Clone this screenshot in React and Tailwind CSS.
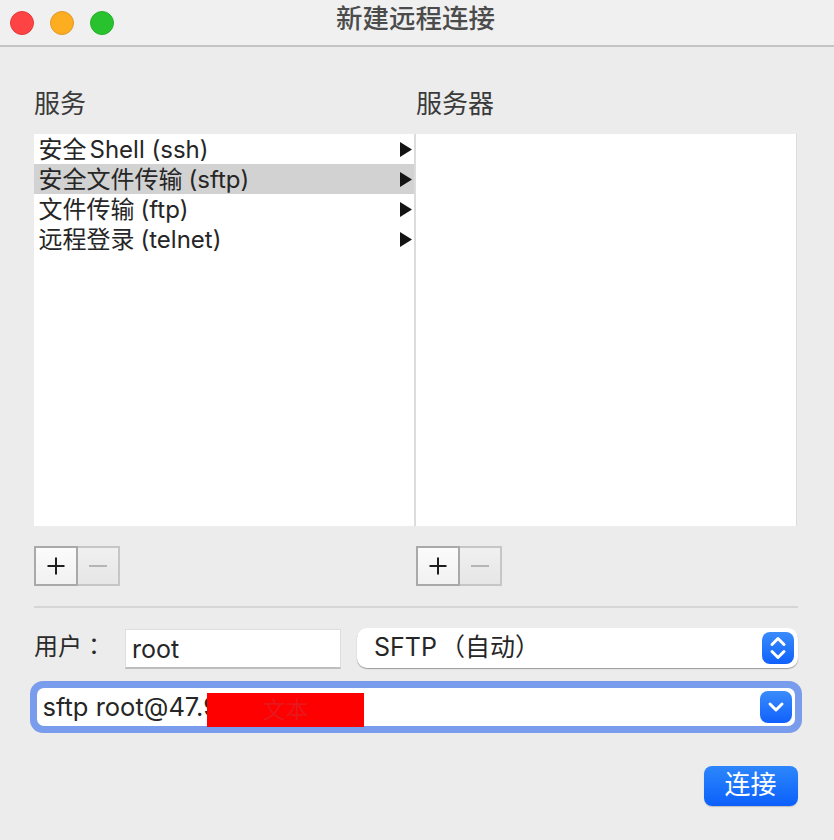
import React from 'react';

const font = "font-['Inter','Noto_Sans_CJK_SC',sans-serif]";

const services = [
  ['安全', 'Shell (ssh)'],
  ['安全文件传输', '(sftp)'],
  ['文件传输', '(ftp)'],
  ['远程登录', '(telnet)'],
];

function Dot({ className }) {
  return <div className={`w-6 h-6 rounded-full border ${className}`} />;
}

function AddRemove() {
  return (
    <div className="flex h-10 mt-5">
      <div className="w-[44px] h-10 border-2 border-[#a9a9a9] bg-gradient-to-b from-[#fbfbfb] to-[#f1f1f1] flex items-center justify-center">
        <svg width="20" height="20" viewBox="0 0 20 20">
          <path d="M10 1.5v17M1.5 10h17" stroke="#1e1e1e" strokeWidth="2" fill="none" />
        </svg>
      </div>
      <div className="w-[42px] h-10 border-2 border-l-0 border-[#c6c6c6] bg-gradient-to-b from-[#f0f0f0] to-[#e6e6e6] flex items-center justify-center">
        <svg width="18" height="4" viewBox="0 0 18 4">
          <path d="M0 2h18" stroke="#b5b5b5" strokeWidth="2" fill="none" />
        </svg>
      </div>
    </div>
  );
}

export default function App() {
  return (
    <div className={`w-[834px] h-[840px] bg-[#ececec] overflow-hidden text-[#262626] ${font}`}>
      {/* Title bar */}
      <div className="relative h-[47px] bg-[#f0f0f0] border-b-2 border-[#c4c4c4] flex items-center pl-[10px] gap-4">
        <Dot className="bg-[#fd4343] border-[#e33b3b]" />
        <Dot className="bg-[#fdae20] border-[#e0982a]" />
        <Dot className="bg-[#28c22f] border-[#2aad2f]" />
        <div className="absolute left-0 right-0 top-0 h-[36px] text-center text-[26.5px] leading-[36px] text-[#4b4b4b] font-medium pr-[3px]">
          新建远程连接
        </div>
      </div>

      <div className="pl-[34px] pr-[36px]">
        {/* Column headings */}
        <div className="flex h-[87px] pt-[39px] text-[26px] leading-[36px] text-[#3a3a3a]">
          <div className="w-[382px]">服务</div>
          <div>服务器</div>
        </div>

        {/* Browser lists */}
        <div className="flex h-[392px]">
          <div className="w-[380px] bg-white">
            {services.map(([zh, latin], i) => (
              <div
                key={zh}
                className={`h-[30px] pl-[4.5px] pr-[2px] flex items-center justify-between text-[24px] leading-[30px] ${i === 1 ? 'bg-[#d2d2d2]' : ''}`}
              >
                <span className="whitespace-nowrap pt-[1px]">
                  {zh}
                  <span className={i === 0 ? 'ml-[3px]' : 'ml-[6px]'}>{latin}</span>
                </span>
                <svg width="12" height="15" viewBox="0 0 12 15" className="shrink-0">
                  <path d="M0 0L12 7.5L0 15Z" fill="#141414" />
                </svg>
              </div>
            ))}
          </div>
          <div className="w-[2px] bg-[#dcdcdc]" />
          <div className="w-[380px] bg-white" />
          <div className="w-[1px] bg-[#dcdcdc]" />
        </div>

        {/* Add / remove buttons */}
        <div className="flex">
          <div className="w-[382px]">
            <AddRemove />
          </div>
          <AddRemove />
        </div>

        <div className="h-[2px] w-[764px] bg-[#d6d6d6] mt-5" />

        {/* User row */}
        <div className="flex items-start mt-5 h-[41px]">
          <div className="w-[91px] text-[24px] leading-[38px] text-[#2a2a2a] whitespace-nowrap font-['Inter','Noto_Sans_CJK_TC',sans-serif]">用户：</div>
          <div className="w-[216px] h-[40px] mt-[1px] bg-white border-t border-x border-[#dedede] border-b-2 border-b-[#bdbdbd] pl-[6px] text-[25px] leading-[38px]">
            root
          </div>
          <div className="ml-4 w-[441px] h-10 rounded-[10px] bg-white shadow-[0_1px_1px_rgba(0,0,0,0.35)] flex items-center justify-between pl-[17px] pr-1">
            <span className="text-[25px] leading-[38px] whitespace-nowrap -mt-[2px]">
              SFTP<span className="ml-[3px]">（自动）</span>
            </span>
            <div className="w-8 h-8 rounded-[8px] bg-gradient-to-b from-[#3a8bfb] to-[#0f60fb] flex items-center justify-center">
              <svg width="18" height="26" viewBox="0 0 18 26">
                <path d="M3 9.5L9 3.5L15 9.5M3 16.5L9 22.5L15 16.5" stroke="#fff" strokeWidth="3" fill="none" strokeLinecap="round" strokeLinejoin="round" />
              </svg>
            </div>
          </div>
        </div>

        {/* Command combo, focused */}
        <div className="relative -ml-1 mt-3 w-[772px] h-[52px] rounded-[13px] bg-[#7a9cec] p-[7px]">
          <div className="h-[38px] rounded-[7px] bg-white flex items-center justify-between pl-[5.5px] pr-[3px]">
            <span className="text-[25.5px] leading-[34px] whitespace-nowrap -mt-[1px]">sftp root@47.9</span>
            <div className="w-8 h-8 rounded-[8px] bg-gradient-to-b from-[#3a8bfb] to-[#0f60fb] flex items-center justify-center">
              <svg width="18" height="12" viewBox="0 0 18 12">
                <path d="M3 3L9 9L15 3" stroke="#fff" strokeWidth="3" fill="none" strokeLinecap="round" strokeLinejoin="round" />
              </svg>
            </div>
          </div>
          {/* redaction over the address */}
          <div className="absolute left-[177px] top-[12px] w-[157px] h-[34px] bg-[#ff0000] text-[#e8171c] text-[23px] leading-[34px] text-center">
            文本
          </div>
        </div>

        {/* Connect */}
        <div className="flex justify-end mt-[33px]">
          <div className="w-[94px] h-10 rounded-[8px] bg-gradient-to-b from-[#2d86fb] to-[#0c5ffb] shadow-[0_1px_1px_rgba(0,0,0,0.2)] text-white text-[26px] leading-[38px] text-center pr-[1px]">
            连接
          </div>
        </div>
      </div>
    </div>
  );
}
